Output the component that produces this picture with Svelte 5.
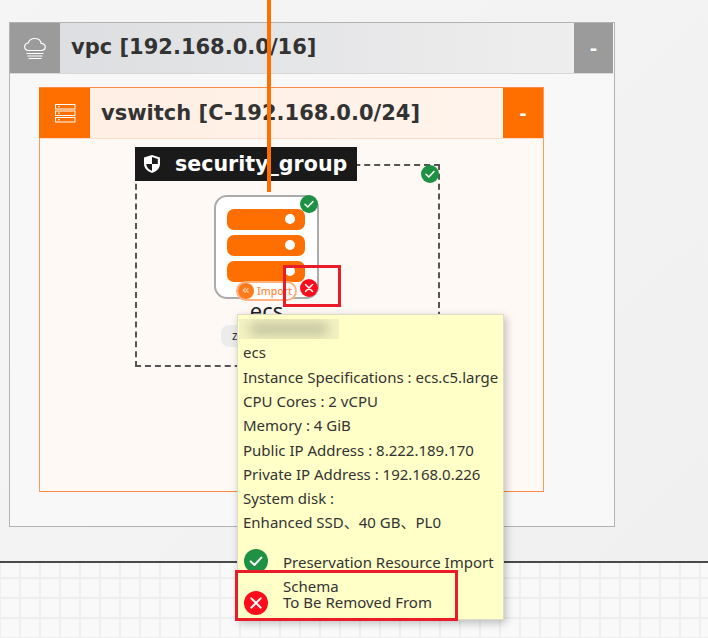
<script>
  const specs = [
    'ecs',
    'Instance Specifications : ecs.c5.large',
    'CPU Cores : 2 vCPU',
    'Memory : 4 GiB',
    'Public IP Address : 8.222.189.170',
    'Private IP Address : 192.168.0.226',
    'System disk :',
    'Enhanced SSD、40 GB、PL0'
  ];
</script>

<div class="page">
  <section class="stage">
    <div class="vpc">
      <header class="head vpc-head">
        <span class="tag vpc-tag">
          <svg width="26" height="26" viewBox="0 0 26 26" fill="none" stroke="#fff" stroke-width="1.2">
            <path d="M6.500 15.500c-2.600-.3-3.800-2-3.800-3.800 0-2 1.500-3.500 3.500-3.700C7 5.300 9.500 3.500 12.700 3.500c3.500 0 6 2.200 6.500 4.900 2.300.2 4 1.600 4 3.600 0 1.900-1.400 3.300-3.700 3.500z"/>
            <path d="M4.500 18.500h17M5.500 21h15M6.500 23.500h13"/>
          </svg>
        </span>
        <h2>vpc [192.168.0.0/16]</h2>
        <span class="fold vpc-fold">-</span>
      </header>
      <div class="vswitch">
        <header class="head sw-head">
          <span class="tag sw-tag">
            <svg width="24" height="22" viewBox="0 0 24 22" fill="none" stroke="#fff" stroke-width="1">
              <rect x="2.500" y="2.500" width="19.500" height="4.500"/>
              <rect x="2.500" y="9" width="19.500" height="4.500"/>
              <rect x="2.500" y="15.500" width="19.500" height="4.500"/>
              <path d="M5 4.700h2M5 11.200h2M5 17.700h2"/>
            </svg>
          </span>
          <h2>vswitch [C-192.168.0.0/24]</h2>
          <span class="fold sw-fold">-</span>
        </header>
        <div class="sw-body"></div>
      </div>
    </div>

    <div class="sg-box"></div>
    <span class="dot ok sg-ok"><svg viewBox="0 0 18 18"><path d="M5 9.300l2.800 2.700L13 6.500"/></svg></span>
    <div class="sg-label">
      <svg width="18" height="20" viewBox="0 0 18 20">
        <path d="M9 1l8 2.600v6c0 4.800-3.300 8-8 9.400-4.700-1.400-8-4.600-8-9.400v-6z" fill="#fff"/>
        <path d="M9 3v7h5.800v-5zM9 10H3.200c.3 3.300 2.600 5.600 5.800 6.800z" fill="#1a1a1a"/>
      </svg>
      <span>security_group</span>
    </div>

    <div class="link"></div>

    <div class="node">
      <i class="bar"></i><i class="bar"></i><i class="bar"></i>
    </div>
    <span class="dot ok node-ok"><svg viewBox="0 0 18 18"><path d="M5 9.300l2.800 2.700L13 6.500"/></svg></span>
    <span class="dot bad node-bad"><svg viewBox="0 0 18 18"><path d="M5.500 5.500l7 7M12.500 5.500l-7 7"/></svg></span>
    <div class="pill"><b>«</b><span>Import</span></div>
    <div class="node-name">ecs</div>
    <div class="zone">z</div>
    <div class="mark mark-top"></div>

    <aside class="tip">
      <div class="redact"><i></i></div>
      <ul>
        {#each specs as line}
          <li>{line}</li>
        {/each}
      </ul>
      <div class="status s1">
        <span class="dot ok big"><svg viewBox="0 0 18 18"><path d="M5 9.300l2.800 2.700L13 6.500"/></svg></span>
        <span class="st-text">Preservation Resource Import</span>
      </div>
      <div class="status s2">
        <span class="dot bad big"><svg viewBox="0 0 18 18"><path d="M5.500 5.500l7 7M12.500 5.500l-7 7"/></svg></span>
        <span class="st-text">Schema<br />To Be Removed From</span>
      </div>
    </aside>
    <div class="mark mark-bottom"></div>
  </section>
  <section class="grid"></section>
</div>

<style>
  :global(body) { margin: 0; background: #f3f3f3; }
  .page { width: 708px; height: 638px; overflow: hidden; font-family: "Noto Sans", "Noto Sans CJK SC", sans-serif; display: flex; flex-direction: column; }
  .stage { position: relative; height: 563px; flex: none; padding: 22px 0 0 9px; box-sizing: border-box; background: linear-gradient(135deg, #f5f5f5, #f0f0f0); border-bottom: 2px solid #4a4a4a; }
  .grid { flex: 1; background-color: #f9f9f9; background-image: linear-gradient(#eeeeee 2px, transparent 2px), linear-gradient(90deg, #efefef 2px, transparent 2px); background-size: 20px 20px; background-position: 19px 14px; }

  .vpc { width: 606px; height: 505px; box-sizing: border-box; border: 1px solid #b3b3b3; background: #f8f8f8; }
  .head { display: flex; align-items: stretch; height: 51px; box-sizing: border-box; }
  .head h2 { flex: 1; margin: 0; padding-left: 11px; font: bold 21px/48px "DejaVu Sans", sans-serif; color: #333; white-space: nowrap; }
  .tag { width: 50px; display: flex; align-items: center; justify-content: center; flex: none; }
  .fold { width: 39px; flex: none; color: #fff; font: bold 18px/52px "DejaVu Sans", sans-serif; text-align: center; }
  .vpc-head { background: linear-gradient(90deg, #dcdde0, #efefef); border-bottom: 1px solid #d8d8d8; margin-right: 1px; }
  .vpc-tag, .vpc-fold { background: #9b9b9b; }
  .vswitch { width: 505px; height: 405px; margin: 13px 0 0 29px; box-sizing: border-box; border: 1px solid #fb9a5c; border-top-color: #fa8a45; border-bottom-color: #fa8a45; background: #fef9f5; display: flex; flex-direction: column; }
  .sw-head { background: linear-gradient(90deg, #ffeee3, #fff4ec); border-bottom: 1px solid #fbdcc8; }
  .sw-head h2 { line-height: 50px; }
  .sw-tag, .sw-fold { background: #ff6f00; }
  .sw-tag { width: 51px; margin-left: -1px; }
  .sw-fold { width: 40px; }
  .sw-body { flex: 1; }

  .sg-box { position: absolute; left: 135px; top: 164px; width: 305px; height: 203px; box-sizing: border-box; border: 2px dashed #555; }
  .sg-label { position: absolute; left: 135px; top: 147px; width: 222px; height: 34px; box-sizing: border-box; padding-left: 8px; background: #1a1a1a; color: #fff; display: flex; align-items: center; gap: 14px; font: bold 20.600px/36px "DejaVu Sans", sans-serif; white-space: nowrap; }
  .link { position: absolute; left: 267px; top: 0; width: 4px; height: 192px; background: #ff6f00; }

  .node { position: absolute; left: 214px; top: 195px; width: 105px; height: 104px; box-sizing: border-box; border: 2px solid #ababab; border-radius: 13px; background: #fff; padding: 12px 12px 0 11px; display: flex; flex-direction: column; gap: 5px; }
  .bar { position: relative; display: block; height: 21px; border-radius: 7px; background: #ff6f00; }
  .bar::after { content: ""; position: absolute; right: 10px; top: 5px; width: 10px; height: 10px; border-radius: 50%; background: #fff; }

  .dot { position: absolute; display: flex; width: 18px; height: 18px; border-radius: 50%; align-items: center; justify-content: center; }
  .dot svg { width: 100%; height: 100%; fill: none; stroke: #fff; stroke-width: 1.500; stroke-linecap: round; stroke-linejoin: round; }
  .ok { background: #1e9145; }
  .bad { background: #fb0d1b; }
  .sg-ok { left: 421px; top: 165px; }
  .node-ok { left: 300px; top: 195px; }
  .node-bad { left: 300px; top: 279px; }

  .pill { position: absolute; left: 236px; top: 281px; width: 61px; height: 20px; box-sizing: border-box; border: 2px solid #ffb182; border-radius: 10px; background: #fff; display: flex; align-items: center; gap: 3px; color: #ff8a45; font-size: 10.500px; font-weight: 500; white-space: nowrap; }
  .pill b { width: 16px; height: 16px; border-radius: 50%; background: #ff7a1a; font: bold 12px/14px "DejaVu Sans", sans-serif; text-align: center; color: #ffc7a0; flex: none; }

  .node-name { position: absolute; left: 214px; top: 296px; width: 105px; text-align: center; font: 22px/28px "Noto Sans", sans-serif; color: #222; }
  .zone { position: absolute; left: 221px; top: 325px; width: 40px; height: 22px; box-sizing: border-box; padding-left: 11px; border-radius: 8px; background: #ececec; color: #333; font-size: 12px; line-height: 22px; }

  .mark { position: absolute; box-sizing: border-box; border: 3px solid #ea1c2a; z-index: 3; }
  .mark-top { left: 283px; top: 265px; width: 58px; height: 42px; }
  .mark-bottom { left: 235px; top: 570px; width: 223px; height: 51px; }

  .tip { position: absolute; left: 237px; top: 314px; width: 267px; height: 306px; box-sizing: border-box; border: 1px solid #dcdcc8; background: #ffffc8; box-shadow: 2px 3px 8px rgba(0,0,0,.25); color: #333; font-size: 15px; z-index: 2; }
  .redact { position: absolute; left: 1px; top: 4px; width: 100px; height: 20px; overflow: hidden; background: #f2f2c2; }
  .redact i { display: block; margin: 4px 10px; height: 12px; background: #c2c29e; filter: blur(6px); border-radius: 6px; }
  ul { list-style: none; margin: 0; padding: 25.400px 0 0 5px; }
  li { height: 24.300px; line-height: 24px; white-space: nowrap; }
  .status { position: absolute; left: 6px; display: flex; }
  .status .dot.big { position: static; width: 24px; height: 24px; flex: none; }
  .st-text { margin-left: 15px; white-space: nowrap; line-height: 16px; }
  .s1 { top: 234px; }
  .s1 .st-text { margin-top: 5px; }
  .s2 { top: 263px; align-items: flex-end; }
  .s2 .st-text { padding-bottom: 5px; }
</style>
